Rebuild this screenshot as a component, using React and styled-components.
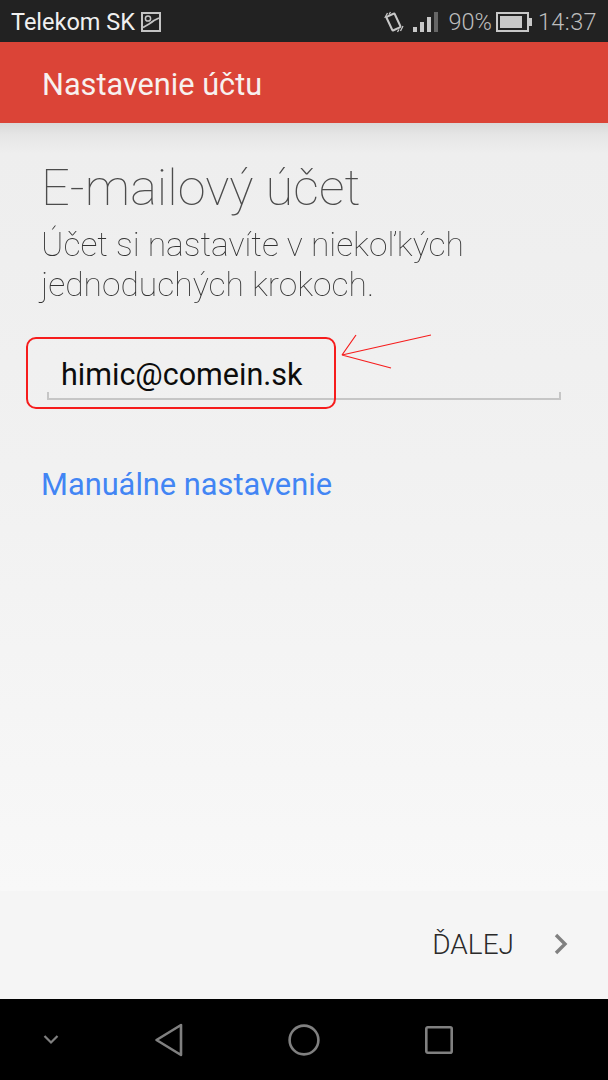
import React from "react";
import styled, { createGlobalStyle } from "styled-components";

const GlobalStyle = createGlobalStyle`
  html, body {
    margin: 0;
    padding: 0;
    background: #000;
  }
  * {
    box-sizing: border-box;
  }
`;

const App = () => {
  return (
    <Phone>
      <GlobalStyle />
      <StatusBar>
        <Carrier>
          Telekom SK
          <svg width="20" height="20" viewBox="0 0 20 20" fill="none">
            <rect x="1" y="1" width="18" height="18" stroke="#c4c4c4" strokeWidth="2" />
            <circle cx="7" cy="6.5" r="2.6" stroke="#c4c4c4" strokeWidth="1.5" />
            <path d="M2 15.5 L8 12 Q11 10 13 8.5 L18 6" stroke="#c4c4c4" strokeWidth="1.6" />
          </svg>
        </Carrier>
        <StatusRight>
          <svg width="20" height="22" viewBox="0 0 20 22" fill="none">
            <rect x="5" y="3.5" width="9" height="15" rx="1" transform="rotate(-25 9.5 11)" stroke="#c8c8c8" strokeWidth="2" />
            <path d="M3.5 2 L0.8 7 M6.5 1 L5 3.5 M16.5 20 L19 15 M13.5 21 L15 18.5" stroke="#c8c8c8" strokeWidth="1.3" />
          </svg>
          <Signal>
            <SignalBar $h={5} $on />
            <SignalBar $h={10} $on />
            <SignalBar $h={15} $on />
            <SignalBar $h={20} />
          </Signal>
          <Percent>90%</Percent>
          <Battery>
            <BatteryFill />
          </Battery>
          <Clock>14:37</Clock>
        </StatusRight>
      </StatusBar>

      <AppBar>Nastavenie účtu</AppBar>

      <Content>
        <Heading>E-mailový účet</Heading>
        <Intro>
          Účet si nastavíte v niekoľkých
          <br />
          jednoduchých krokoch.
        </Intro>
        <Field>
          <FieldText>himic@comein.sk</FieldText>
          <RedBox />
          <RedArrow width="92" height="36" viewBox="0 0 92 36" fill="none">
            <path d="M91 1 L2 21 L51 34 M2 21 L16 1" stroke="#f61c1c" strokeWidth="1.2" />
          </RedArrow>
        </Field>
        <ManualLink>Manuálne nastavenie</ManualLink>
      </Content>

      <Footer>
        <NextLabel>ĎALEJ</NextLabel>
        <svg width="14" height="22" viewBox="0 0 14 22" fill="none">
          <path d="M2 2 L11 11 L2 20" stroke="#808080" strokeWidth="3.4" />
        </svg>
      </Footer>

      <NavBar>
        <NavSlot>
          <svg width="18" height="12" viewBox="0 0 18 12" fill="none">
            <path d="M2.5 2 L9 8.5 L15.5 2" stroke="#808080" strokeWidth="2.2" />
          </svg>
        </NavSlot>
        <NavSlot>
          <svg width="30" height="34" viewBox="0 0 30 34" fill="none">
            <path d="M27 2 V32 L2.5 17 Z" stroke="#808080" strokeWidth="2.6" strokeLinejoin="round" />
          </svg>
        </NavSlot>
        <NavSlot>
          <svg width="34" height="34" viewBox="0 0 34 34" fill="none">
            <circle cx="17" cy="17" r="14.4" stroke="#808080" strokeWidth="2.6" />
          </svg>
        </NavSlot>
        <NavSlot>
          <svg width="30" height="30" viewBox="0 0 30 30" fill="none">
            <rect x="2.3" y="2.3" width="25.4" height="25.4" rx="1.5" stroke="#808080" strokeWidth="2.6" />
          </svg>
        </NavSlot>
      </NavBar>
    </Phone>
  );
};

const Phone = styled.div`
  width: 608px;
  height: 1080px;
  display: flex;
  flex-direction: column;
  font-family: Roboto, "Liberation Sans", sans-serif;
  overflow: hidden;
`;

const StatusBar = styled.div`
  height: 42px;
  background: #222222;
  display: flex;
  align-items: center;
  justify-content: space-between;
  padding: 1px 11px 0;
`;

const Carrier = styled.div`
  display: flex;
  align-items: center;
  gap: 6px;
  color: #f0f0f0;
  font-size: 23.5px;
`;

const StatusRight = styled.div`
  display: flex;
  align-items: center;
  color: #bdbdbd;
  font-size: 23.5px;
  font-weight: 300;
`;

const Signal = styled.div`
  display: flex;
  align-items: flex-end;
  gap: 3px;
  margin-left: 9px;
  height: 20px;
`;

const SignalBar = styled.span`
  width: 4px;
  height: ${(p) => p.$h}px;
  background: ${(p) => (p.$on ? "#c8c8c8" : "#666666")};
`;

const Percent = styled.span`
  margin-left: 10px;
`;

const Battery = styled.div`
  position: relative;
  width: 33px;
  height: 20px;
  margin-left: 4px;
  border: 2px solid #c8c8c8;
  padding: 2px;
  &::after {
    content: "";
    position: absolute;
    right: -5px;
    top: 4px;
    width: 3px;
    height: 8px;
    background: #c8c8c8;
  }
`;

const BatteryFill = styled.div`
  width: 90%;
  height: 100%;
  background: #c8c8c8;
`;

const Clock = styled.span`
  margin-left: 9px;
  letter-spacing: 0.4px;
`;

const AppBar = styled.div`
  height: 81px;
  background: #db4437;
  color: #f7f1ef;
  font-size: 30.7px;
  display: flex;
  align-items: center;
  padding: 3px 0 0 42px;
`;

const Content = styled.div`
  flex: 1;
  background: linear-gradient(#d9d9d9, #e6e6e6 12px, #eeeeee 30px, #f1f1f1 45%, #f8f8f8);
  padding: 35px 47px 0 41px;
`;

const Heading = styled.h1`
  margin: 0;
  font-size: 50.6px;
  line-height: 60px;
  font-weight: 100;
  color: #4c4c4c;
`;

const Intro = styled.p`
  margin: 7px 0 0;
  font-size: 33.6px;
  line-height: 40px;
  font-weight: 100;
  color: #333333;
  will-change: transform;
`;

const Field = styled.div`
  position: relative;
  margin: 26px 0 0 6px;
  height: 69px;
  padding: 25px 0 0 14px;
  border-bottom: 2px solid #c6c6c6;
  &::before,
  &::after {
    content: "";
    position: absolute;
    bottom: 0;
    width: 2px;
    height: 6px;
    background: #c6c6c6;
  }
  &::before {
    left: 0;
  }
  &::after {
    right: 0;
  }
`;

const FieldText = styled.div`
  font-size: 30.5px;
  line-height: 38px;
  color: #0c0c0c;
`;

const RedBox = styled.div`
  position: absolute;
  left: -21px;
  top: 6px;
  width: 310px;
  height: 72px;
  border: 2px solid #f61c1c;
  border-radius: 10px;
`;

const RedArrow = styled.svg`
  position: absolute;
  left: 293px;
  top: 3px;
`;

const ManualLink = styled.div`
  margin-top: 67px;
  font-size: 30.8px;
  line-height: 36px;
  color: #4285f4;
`;

const Footer = styled.div`
  height: 108px;
  background: #f5f5f5;
  display: flex;
  align-items: center;
  justify-content: flex-end;
  gap: 40px;
  padding: 0 40px 2px 0;
`;

const NextLabel = styled.span`
  font-size: 28px;
  font-weight: 300;
  color: #2a2a2a;
`;

const NavBar = styled.div`
  height: 81px;
  background: #000000;
  display: grid;
  grid-template-columns: 101px 135px 135px 135px;
  padding-right: 102px;
`;

const NavSlot = styled.div`
  display: flex;
  align-items: center;
  justify-content: center;
`;

export default App;
